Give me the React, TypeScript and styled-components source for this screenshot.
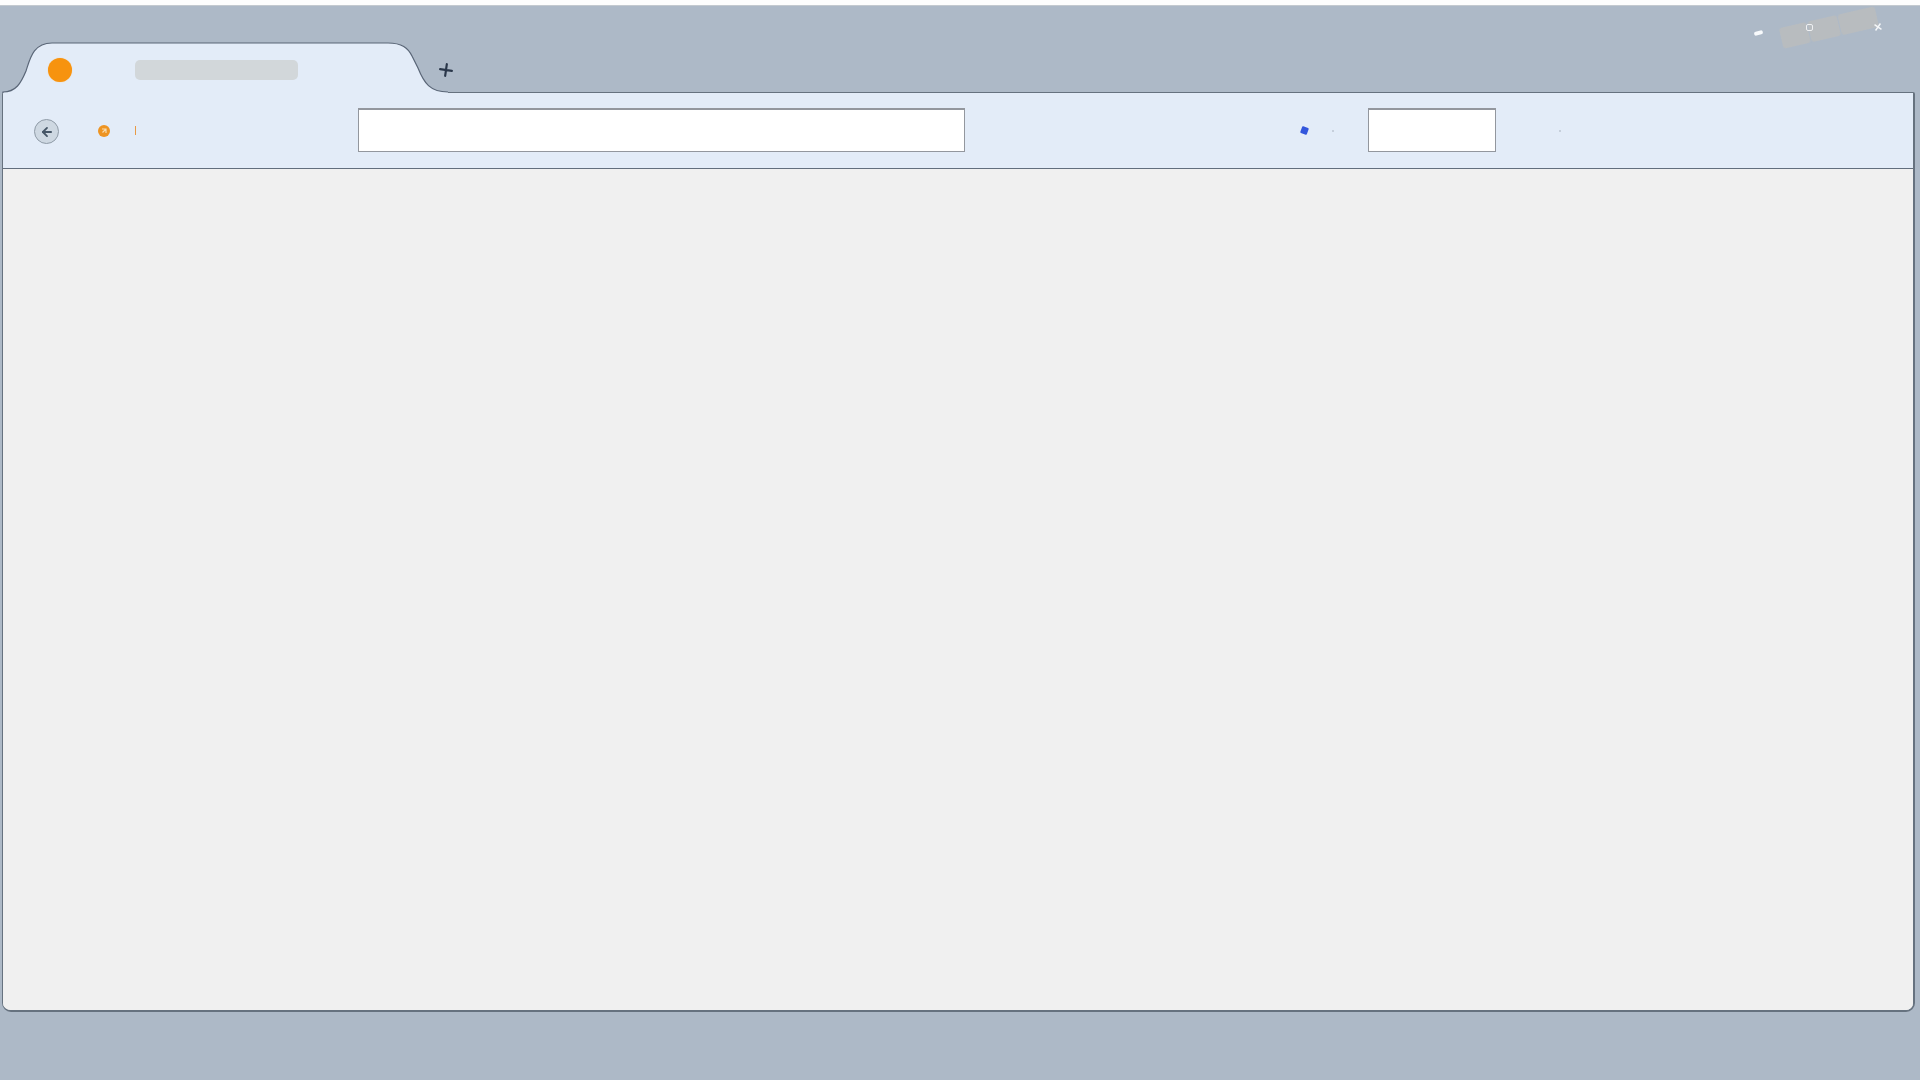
import styled, { createGlobalStyle } from "styled-components";
import { ArrowLeft } from "lucide-react";

const GlobalStyle = createGlobalStyle`
  html,
  body {
    margin: 0;
    padding: 0;
    background: #adb9c7;
  }
`;

const Page = styled.div`
  width: 1920px;
  height: 1080px;
  overflow: hidden;
  display: flex;
  flex-direction: column;
  background: #adb9c7;
`;

const TopStrip = styled.div`
  height: 5px;
  flex: none;
  background: #fdfdfd;
  border-bottom: 1px solid #c3c9cf;
`;

const TabBar = styled.div`
  position: relative;
  height: 86px;
  flex: none;
  display: flex;
  align-items: flex-end;
`;

const Tab = styled.div`
  position: relative;
  z-index: 1;
  width: 448px;
  height: 51px;
  margin-bottom: -1px;
  flex: none;
  display: flex;
  align-items: center;
  padding: 5px 0 0 48px;
  box-sizing: border-box;
`;

const TabShape = styled.svg`
  position: absolute;
  left: 0;
  top: 0;
  z-index: -1;
`;

const TabDot = styled.div`
  width: 24px;
  height: 24px;
  border-radius: 50%;
  background: #f7930f;
  box-shadow: 0 0 1px #f9c277;
  flex: none;
`;

const TabTitle = styled.div`
  width: 163px;
  height: 20px;
  margin-left: 63px;
  border-radius: 5px;
  background: #d2d7da;
  flex: none;
`;

const NewTab = styled.svg`
  align-self: flex-end;
  margin: 0 0 15px -9px;
  flex: none;
  transform: rotate(8deg);
`;

const WindowControls = styled.div`
  position: absolute;
  right: 42px;
  top: 3px;
  width: 125px;
  height: 40px;
`;

const ControlBand = styled.div`
  position: absolute;
  left: 27px;
  top: 8px;
  display: flex;
  gap: 1px;
  transform: rotate(-13deg);
  filter: blur(0.6px);
`;

const BandPiece = styled.div<{ $width: number }>`
  width: ${({ $width }) => $width}px;
  height: 21px;
  background: #b8bcbf;
  border-radius: 3px;
`;

const MinimiseMark = styled.div`
  position: absolute;
  left: 1px;
  top: 22px;
  width: 9px;
  height: 4px;
  border-radius: 2px;
  background: #f8fafc;
  transform: rotate(-14deg);
`;

const MaximiseMark = styled.div`
  position: absolute;
  left: 53px;
  top: 15px;
  width: 5px;
  height: 5px;
  border: 1px solid #eef0f2;
  border-radius: 2px;
`;

const CloseMark = styled.svg`
  position: absolute;
  left: 121px;
  top: 14px;
  transform: rotate(-10deg);
`;

const Window = styled.div`
  flex: none;
  width: 1913px;
  height: 920px;
  margin-left: 2px;
  box-sizing: border-box;
  display: flex;
  flex-direction: column;
  border: 1px solid #66727f;
  border-width: 1px 2px 2px 1px;
  border-radius: 2px 2px 9px 9px;
  overflow: hidden;
  background: #f0f0f0;
`;

const Toolbar = styled.div`
  height: 76px;
  flex: none;
  box-sizing: border-box;
  display: flex;
  align-items: center;
  background: #e3ecf8;
  border-bottom: 1px solid #626e7d;
`;

const BackButton = styled.div`
  width: 25px;
  height: 25px;
  margin: 2px 0 0 31px;
  flex: none;
  box-sizing: border-box;
  display: flex;
  align-items: center;
  justify-content: center;
  border-radius: 50%;
  border: 1px solid #8f9ba7;
  background: #ced8e2;
  color: #465667;
`;

const SiteBadge = styled.svg`
  margin-left: 39px;
  flex: none;
`;

const Tick = styled.div`
  width: 1px;
  height: 9px;
  margin-left: 25px;
  flex: none;
  background: #e89a45;
`;

const Field = styled.div<{ $width: number; $left: number }>`
  width: ${({ $width }) => $width}px;
  height: 44px;
  margin: -2px 0 0 ${({ $left }) => $left}px;
  flex: none;
  box-sizing: border-box;
  background: #ffffff;
  border: 1px solid #93979e;
  border-top-width: 2px;
`;

const BlueMark = styled.div`
  width: 7px;
  height: 7px;
  margin-left: 336px;
  flex: none;
  background: #3256dc;
  border-radius: 1px;
  transform: rotate(20deg);
`;

const Speck = styled.div<{ $left: number }>`
  width: 2px;
  height: 2px;
  margin-left: ${({ $left }) => $left}px;
  flex: none;
  background: #bcc6d2;
  border-radius: 50%;
`;

const Content = styled.div`
  flex: 1;
  background: #f0f0f0;
`;

export default function App() {
  return (
    <Page>
      <GlobalStyle />
      <TopStrip />
      <TabBar>
        <Tab>
          <TabShape width="448" height="51" viewBox="0 0 448 51">
            <path
              d="M3 51 V50 C16 50 21 41 26 29 C30 17 33 1 52 1 H388 C402 1 408 6 412 14 L418 26 C424 41 430 50 448 50 V51 Z"
              fill="#e3ecf8"
            />
            <path
              d="M3 51 V50 C16 50 21 41 26 29 C30 17 33 1 52 1 H388 C402 1 408 6 412 14 L418 26 C424 41 430 50 448 50"
              fill="none"
              stroke="#5a6677"
              strokeWidth="1.2"
            />
          </TabShape>
          <TabDot />
          <TabTitle />
        </Tab>
        <NewTab width="14" height="14" viewBox="0 0 14 14">
          <path
            d="M7 1 V13 M1 7 H13"
            stroke="#2a374a"
            strokeWidth="2.2"
            strokeLinecap="round"
          />
        </NewTab>
        <WindowControls>
          <MinimiseMark />
          <ControlBand>
            <BandPiece $width={28} />
            <BandPiece $width={30} />
            <BandPiece $width={38} />
          </ControlBand>
          <MaximiseMark />
          <CloseMark width="8" height="8" viewBox="0 0 8 8">
            <path
              d="M1 1 L7 7 M7 1 L1 7"
              stroke="#f4f6f8"
              strokeWidth="1.4"
            />
          </CloseMark>
        </WindowControls>
      </TabBar>
      <Window>
        <Toolbar>
          <BackButton>
            <ArrowLeft size={14} strokeWidth={3.2} />
          </BackButton>
          <SiteBadge width="12" height="12" viewBox="0 0 12 12">
            <circle cx="6" cy="6" r="6" fill="#ee9422" />
            <path
              d="M4 4 H8 V8 M8 4 L4.5 7.5"
              fill="none"
              stroke="#f9dcae"
              strokeWidth="1.2"
            />
          </SiteBadge>
          <Tick />
          <Field $width={607} $left={222} />
          <BlueMark />
          <Speck $left={24} />
          <Field $width={128} $left={34} />
          <Speck $left={63} />
        </Toolbar>
        <Content />
      </Window>
    </Page>
  );
}
